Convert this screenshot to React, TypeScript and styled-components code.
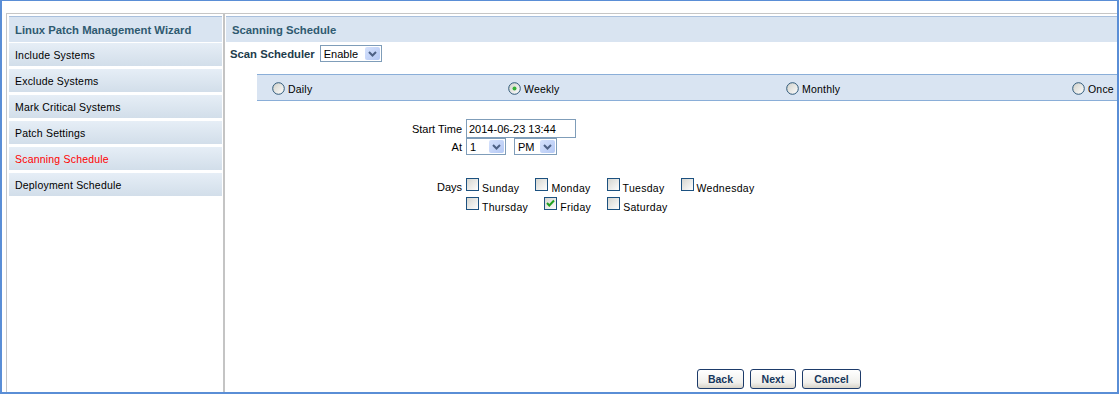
import styled, { createGlobalStyle } from 'styled-components'

const GlobalStyle = createGlobalStyle`
	body {
		margin: 0;
		background: #fff;
		font-family: 'Liberation Sans', Arial, sans-serif;
	}
`

const Frame = styled.div`
	width: 1119px;
	height: 394px;
	box-sizing: border-box;
	border-style: solid;
	border-color: #5a8ed6;
	border-width: 1px 2px 2px 2px;
	padding: 12px 0 0 4px;
	display: flex;
`

const Workspace = styled.div`
	flex: 1;
	display: grid;
	grid-template-columns: 216px 2px 1fr;
	border-top: 1px solid #c6c6c6;
	border-left: 1px solid #c6c6c6;
`

const Sidebar = styled.nav`
	padding: 2px 1px 0 2px;
	display: flex;
	flex-direction: column;
`

const PanelHeader = styled.div`
	height: 26px;
	box-sizing: border-box;
	border-top: 1px solid #a9c0dd;
	background: #d9e4f1;
	color: #2f5a70;
	font-weight: bold;
	font-size: 11.3px;
	padding-left: 6px;
	display: flex;
	align-items: center;
`

const NavItem = styled.div<{ $active?: boolean }>`
	height: 23px;
	margin-top: 3px;
	&:nth-child(2) {
		margin-top: 1px;
	}
	background: linear-gradient(#e6eef6, #d2deea);
	padding-left: 6px;
	display: flex;
	align-items: center;
	font-size: 10.5px;
	letter-spacing: 0.2px;
	color: ${(p) => (p.$active ? '#ff0000' : '#000')};
`

const Divider = styled.div`
	background: #c4c4c4;
`

const Main = styled.section`
	padding: 2px 0 3px 1px;
	display: flex;
	flex-direction: column;
	min-width: 0;
`

const SchedulerRow = styled.div`
	margin: 3px 0 0 4px;
	display: flex;
	align-items: center;
	gap: 5px;
`

const BoldLabel = styled.span`
	font-weight: bold;
	font-size: 11.3px;
	color: #1e3c4c;
`

const SelectBox = styled.div<{ $width: number }>`
	width: ${(p) => p.$width}px;
	height: 17px;
	box-sizing: border-box;
	border: 1px solid #7f9db9;
	background: #fff;
	padding: 0 1px 0 3px;
	display: flex;
	align-items: center;
	justify-content: space-between;
	font-size: 11px;
	color: #000;
`

const ArrowButton = styled.span`
	width: 15px;
	height: 13px;
	border-radius: 2px;
	background: linear-gradient(135deg, #d6e2fc, #b4c8f4);
	display: flex;
	align-items: center;
	justify-content: center;
`

const RadioBar = styled.div`
	margin: 12px 0 0 31px;
	height: 27px;
	box-sizing: border-box;
	border-top: 1px solid #8aaed8;
	border-bottom: 1px solid #8aaed8;
	background: #d9e4f2;
	padding-left: 15px;
	display: grid;
	grid-template-columns: 236px 278px 286px auto;
	align-items: center;
`

const RadioOption = styled.label`
	display: flex;
	align-items: center;
	gap: 3px;
	font-size: 10.5px;
	letter-spacing: 0.2px;
	color: #000;
	padding-top: 2px;
`

const FormGrid = styled.div`
	margin-top: 18px;
	display: grid;
	grid-template-columns: 236px auto;
	column-gap: 4px;
	align-items: center;
`

const FieldLabel = styled.span<{ $top?: boolean }>`
	text-align: right;
	font-size: 11px;
	color: #000;
	align-self: ${(p) => (p.$top ? 'start' : 'center')};
	padding-top: ${(p) => (p.$top ? '3px' : '0')};
	margin-top: ${(p) => (p.$top ? '23px' : '0')};
`

const Controls = styled.div<{ $gap?: number }>`
	display: flex;
	align-items: center;
	gap: ${(p) => p.$gap ?? 0}px;
`

const TextInput = styled.div`
	width: 110px;
	height: 19px;
	box-sizing: border-box;
	border: 1px solid #7f9db9;
	padding-left: 2px;
	display: flex;
	align-items: center;
	font-size: 11px;
`

const DaysBlock = styled.div`
	margin-top: 23px;
	display: flex;
	flex-direction: column;
	gap: 6px;
`

const DayRow = styled.div`
	display: flex;
	gap: 16px;
`

const DayOption = styled.label`
	height: 13px;
	display: flex;
	align-items: flex-start;
	gap: 3px;
	font-size: 10.5px;
	letter-spacing: 0.3px;
	color: #000;
`

const DayText = styled.span`
	margin-top: 4px;
	line-height: 12px;
`

const ButtonBar = styled.div`
	margin-top: auto;
	padding-left: 471px;
	display: flex;
	gap: 6px;
`

const Button = styled.button<{ $width: number }>`
	width: ${(p) => p.$width}px;
	height: 20px;
	box-sizing: border-box;
	border: 1px solid #1d3b6a;
	border-radius: 3px;
	background: linear-gradient(#ffffff, #f1f0ec 70%, #d8d3c8);
	font-family: 'Liberation Sans', Arial, sans-serif;
	font-weight: bold;
	font-size: 10.5px;
	color: #16365c;
	padding: 0;
	cursor: pointer;
`

function Chevron() {
	return (
		<svg width="9" height="6" viewBox="0 0 9 6">
			<path d="M1 1 L4.5 4.5 L8 1" fill="none" stroke="#4d6185" strokeWidth="2" />
		</svg>
	)
}

function Select({ value, width }: { value: string; width: number }) {
	return (
		<SelectBox $width={width}>
			<span>{value}</span>
			<ArrowButton>
				<Chevron />
			</ArrowButton>
		</SelectBox>
	)
}

function Radio({ checked }: { checked?: boolean }) {
	return (
		<svg width="13" height="13" viewBox="0 0 13 13">
			<defs>
				<linearGradient id="radioFill" x1="0" y1="0" x2="1" y2="1">
					<stop offset="0" stopColor="#cfcfc8" />
					<stop offset="1" stopColor="#ffffff" />
				</linearGradient>
			</defs>
			<circle cx="6.5" cy="6.5" r="5.8" fill="url(#radioFill)" stroke="#2e5878" strokeWidth="1" />
			{checked && <circle cx="6.5" cy="6.5" r="2" fill="#35b035" />}
		</svg>
	)
}

function Checkbox({ checked }: { checked?: boolean }) {
	return (
		<svg width="13" height="13" viewBox="0 0 13 13">
			<defs>
				<linearGradient id="boxFill" x1="0" y1="0" x2="1" y2="1">
					<stop offset="0" stopColor="#d4d4ce" />
					<stop offset="1" stopColor="#ffffff" />
				</linearGradient>
			</defs>
			<rect x="0.5" y="0.5" width="12" height="12" fill="url(#boxFill)" stroke="#1c5180" />
			{checked && (
				<path d="M3 6 L5.3 8.5 L10 3.5" fill="none" stroke="#21a121" strokeWidth="2" />
			)}
		</svg>
	)
}

const navItems = [
	'Include Systems',
	'Exclude Systems',
	'Mark Critical Systems',
	'Patch Settings',
	'Scanning Schedule',
	'Deployment Schedule',
]

const frequencies = [
	{ label: 'Daily', checked: false },
	{ label: 'Weekly', checked: true },
	{ label: 'Monthly', checked: false },
	{ label: 'Once', checked: false },
]

const dayRows = [
	[
		{ label: 'Sunday', checked: false },
		{ label: 'Monday', checked: false },
		{ label: 'Tuesday', checked: false },
		{ label: 'Wednesday', checked: false },
	],
	[
		{ label: 'Thursday', checked: false },
		{ label: 'Friday', checked: true },
		{ label: 'Saturday', checked: false },
	],
]

export default function App() {
	return (
		<>
			<GlobalStyle />
			<Frame>
				<Workspace>
					<Sidebar>
						<PanelHeader>Linux Patch Management Wizard</PanelHeader>
						{navItems.map((el) => (
							<NavItem key={el} $active={el === 'Scanning Schedule'}>
								{el}
							</NavItem>
						))}
					</Sidebar>

					<Divider />

					<Main>
						<PanelHeader>Scanning Schedule</PanelHeader>

						<SchedulerRow>
							<BoldLabel>Scan Scheduler</BoldLabel>
							<Select value="Enable" width={62} />
						</SchedulerRow>

						<RadioBar>
							{frequencies.map((el) => (
								<RadioOption key={el.label}>
									<Radio checked={el.checked} />
									<span>{el.label}</span>
								</RadioOption>
							))}
						</RadioBar>

						<FormGrid>
							<FieldLabel>Start Time</FieldLabel>
							<Controls>
								<TextInput>2014-06-23 13:44</TextInput>
							</Controls>

							<FieldLabel>At</FieldLabel>
							<Controls $gap={8}>
								<Select value="1" width={40} />
								<Select value="PM" width={43} />
							</Controls>

							<FieldLabel $top>Days</FieldLabel>
							<DaysBlock>
								{dayRows.map((row, i) => (
									<DayRow key={`days-${i}`}>
										{row.map((d) => (
											<DayOption key={d.label}>
												<Checkbox checked={d.checked} />
												<DayText>{d.label}</DayText>
											</DayOption>
										))}
									</DayRow>
								))}
							</DaysBlock>
						</FormGrid>

						<ButtonBar>
							<Button $width={47}>Back</Button>
							<Button $width={46}>Next</Button>
							<Button $width={59}>Cancel</Button>
						</ButtonBar>
					</Main>
				</Workspace>
			</Frame>
		</>
	)
}
